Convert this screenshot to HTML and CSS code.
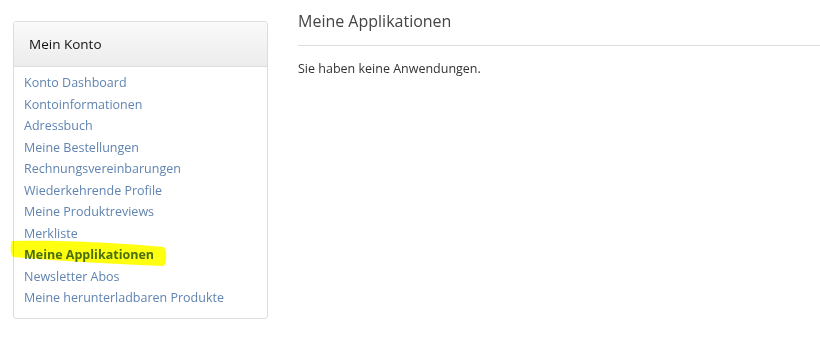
FILE: index.html
```html
<!DOCTYPE html>
<html lang="de">
<head>
  <meta charset="UTF-8" />
  <title>Meine Applikationen</title>
  <link rel="stylesheet" href="styles.css">
</head>
<body>

<div class="page">
  <!-- Sidebar -->
  <aside class="account-nav">
    <div class="account-nav-title">Mein Konto</div>
    <ul class="account-links">
      <li><a href="#">Konto Dashboard</a></li>
      <li><a href="#">Kontoinformationen</a></li>
      <li><a href="#">Adressbuch</a></li>
      <li><a href="#">Meine Bestellungen</a></li>
      <li><a href="#">Rechnungsvereinbarungen</a></li>
      <li><a href="#">Wiederkehrende Profile</a></li>
      <li><a href="#">Meine Produktreviews</a></li>
      <li><a href="#">Merkliste</a></li>
      <li class="current">
        <strong>Meine Applikationen</strong>
        <svg class="marker" width="160" height="30" viewBox="0 0 160 30">
          <path d="M2 2 C50 1 110 4 154 8 C157 12 157 22 154 27 C100 25 50 22 3 18 C0 14 0 6 2 2 Z" fill="#ffff10"/>
        </svg>
      </li>
      <li><a href="#">Newsletter Abos</a></li>
      <li><a href="#">Meine herunterladbaren Produkte</a></li>
    </ul>
  </aside>

  <!-- Main content -->
  <main class="content">
    <h1 class="page-title">Meine Applikationen</h1>
    <p>Sie haben keine Anwendungen.</p>
  </main>
</div>

</body>
</html>
```

FILE: styles.css
```css
* {
  margin: 0;
  padding: 0;
  box-sizing: border-box;
}

body {
  font-family: "Open Sans", Arial, sans-serif;
  font-size: 12.5px;
  color: #333;
  background-color: #fff;
}

.page {
  display: flex;
  align-items: flex-start;
  gap: 30px;
  padding: 0 0 0 13px;
}

.account-nav {
  width: 255px;
  margin-top: 21px;
  border: 1px solid #dcdcdc;
  border-radius: 3px;
}

.account-nav-title {
  height: 45px;
  padding: 0 15px;
  display: flex;
  align-items: center;
  font-size: 13.5px;
  color: #111;
  background: linear-gradient(#fafafa, #ececec);
  border-bottom: 1px solid #dcdcdc;
}

.account-links {
  list-style: none;
  padding: 5px 10px 9px;
}

.account-links li {
  line-height: 21.5px;
  position: relative;
}

.account-links a {
  color: #6084b1;
  text-decoration: none;
}

.account-links .current strong {
  color: #4a6fa0;
  font-weight: bold;
}

.marker {
  position: absolute;
  left: -14px;
  top: -5px;
  mix-blend-mode: multiply;
}

.content {
  flex: 1;
  padding-top: 10px;
}

.page-title {
  font-size: 16px;
  font-weight: normal;
  color: #444;
  padding-bottom: 13px;
  border-bottom: 1px solid #ddd;
  margin-bottom: 14px;
}
```
